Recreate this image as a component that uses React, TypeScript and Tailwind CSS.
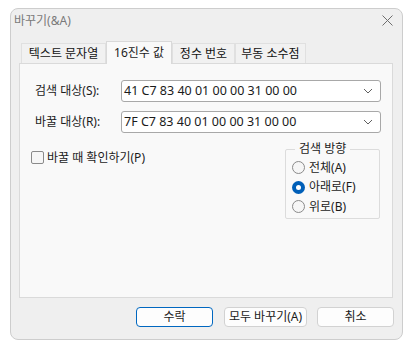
import React from "react";

const font = { fontFamily: '"Noto Sans", "Noto Sans CJK KR", sans-serif' };

function Chevron() {
  return (
    <svg width="10" height="6" viewBox="0 0 10 6" className="shrink-0">
      <path d="M1 1 L5 5 L9 1" fill="none" stroke="#606060" strokeWidth="1" />
    </svg>
  );
}

function Combo({ value }: { value: string }) {
  return (
    <div className="flex h-[22px] w-[260px] items-center justify-between rounded-[3px] border border-[#a8a8a8] bg-white pl-[2px] pr-[7px]">
      <span className="text-[12.5px] leading-none text-[#1b1b1b]">{value}</span>
      <Chevron />
    </div>
  );
}

function Radio({ checked, label }: { checked?: boolean; label: string }) {
  return (
    <div className="flex h-[19.5px] items-center gap-[4px]">
      {checked ? (
        <span className="flex h-[13px] w-[13px] items-center justify-center rounded-full bg-[#005fb8]">
          <span className="h-[5px] w-[5px] rounded-full bg-white" />
        </span>
      ) : (
        <span className="h-[13px] w-[13px] rounded-full border border-[#8a8a8a] bg-[#f6f6f6]" />
      )}
      <span className="text-[12px] leading-none text-[#1b1b1b]">{label}</span>
    </div>
  );
}

export default function App() {
  const tabs = [
    { label: "텍스트 문자열", w: "w-[85px]", active: false },
    { label: "16진수 값", w: "w-[66px]", active: true },
    { label: "정수 번호", w: "w-[63px]", active: false },
    { label: "부동 소수점", w: "w-[71px]", active: false },
  ];
  return (
    <div className="h-[346px] w-[410px] bg-white pl-[10px] pt-[8px]" style={font}>
      <div className="flex h-[332px] w-[393px] flex-col rounded-[8px] border border-[#cdcdcd] bg-[#efefef]">
        {/* title bar */}
        <div className="flex h-[23px] items-center justify-between pl-[3px] pr-[9px]">
          <span className="text-[12px] leading-none text-[#7a7a7a]">바꾸기(&amp;A)</span>
          <svg width="11" height="11" viewBox="0 0 11 11">
            <path d="M0.5 0.5 L10.5 10.5 M10.5 0.5 L0.5 10.5" stroke="#6e6e6e" strokeWidth="1" />
          </svg>
        </div>
        {/* tabs */}
        <div className="mt-[9px] flex h-[22px] items-end pl-[10px]">
          {tabs.map((t) =>
            t.active ? (
              <div
                key={t.label}
                className={`${t.w} relative z-10 mb-[-1px] flex h-[23px] items-center justify-center border border-b-0 border-[#d9d9d9] bg-[#f9f9f9] text-[12px] text-[#1b1b1b]`}
              >
                {t.label}
              </div>
            ) : (
              <div
                key={t.label}
                className={`${t.w} flex h-[20px] items-center justify-center border border-b-0 border-[#e0e0e0] bg-[#f1f1f1] text-[12px] text-[#111111]`}
              >
                {t.label}
              </div>
            )
          )}
        </div>
        {/* panel */}
        <div className="ml-[8px] h-[235px] w-[374px] border border-[#dadada] bg-[#f9f9f9] pl-[15px] pt-[16px]">
          <div className="flex flex-col gap-[9px]">
            <div className="flex items-center">
              <span className="w-[86px] text-[12px] text-[#1b1b1b]">검색 대상(S):</span>
              <Combo value="41 C7 83 40 01 00 00 31 00 00" />
            </div>
            <div className="flex items-center">
              <span className="w-[86px] text-[12px] text-[#1b1b1b]">바꿀 대상(R):</span>
              <Combo value="7F C7 83 40 01 00 00 31 00 00" />
            </div>
          </div>
          <div className="mt-[9px] flex items-start justify-between pr-[12px]">
            <div className="ml-[-4px] mt-[9px] flex items-center gap-[3px]">
              <span className="h-[13px] w-[13px] rounded-[2px] border border-[#8a8a8a] bg-[#f6f6f6]" />
              <span className="text-[12px] leading-none text-[#1b1b1b]">바꿀 때 확인하기(P)</span>
            </div>
            <fieldset className="h-[77px] w-[95px] rounded-[2px] border border-[#dcdcdc] pl-[6px]">
              <legend className="ml-[3px] px-[4px] text-[12px] leading-[14px] text-[#1b1b1b]">검색 방향</legend>
              <div className="mt-[2px] flex flex-col">
                <Radio label="전체(A)" />
                <Radio label="아래로(F)" checked />
                <Radio label="위로(B)" />
              </div>
            </fieldset>
          </div>
        </div>
        {/* buttons */}
        <div className="mt-[9px] flex justify-end pr-[8px]">
          <button className="h-[20px] w-[77px] rounded-[4px] border border-[#0067c0] bg-[#fdfdfd] text-[12px] leading-none text-[#1b1b1b]">
            수락
          </button>
          <button className="ml-[11px] h-[20px] w-[83px] rounded-[4px] border border-[#d2d2d2] bg-[#fdfdfd] text-[12px] leading-none text-[#1b1b1b]">
            모두 바꾸기(A)
          </button>
          <button className="ml-[10px] h-[20px] w-[77px] rounded-[4px] border border-[#d2d2d2] bg-[#fdfdfd] text-[12px] leading-none text-[#1b1b1b]">
            취소
          </button>
        </div>
      </div>
    </div>
  );
}
